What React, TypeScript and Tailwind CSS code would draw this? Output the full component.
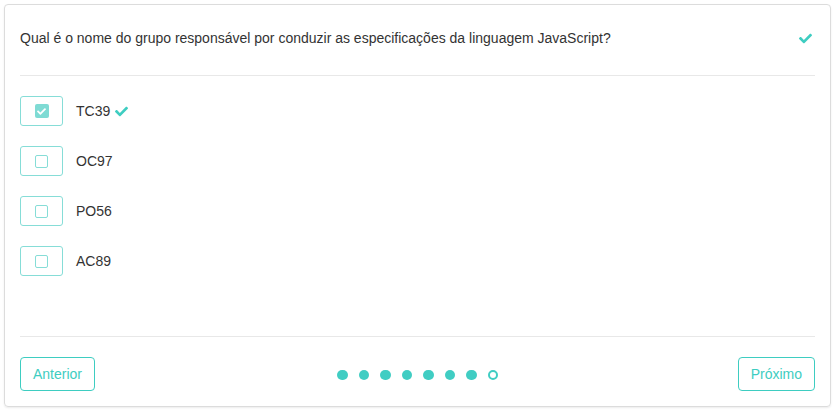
import React from "react";

const Check = ({ className = "" }: { className?: string }) => (
  <svg viewBox="0 0 512 512" className={className} fill="currentColor">
    <path d="M173.9 439.4l-166.4-166.4c-10-10-10-26.2 0-36.2l36.2-36.2c10-10 26.2-10 36.2 0L192 312.7 432.1 72.6c10-10 26.2-10 36.2 0l36.2 36.2c10 10 10 26.2 0 36.2L210.1 439.4c-10 10-26.2 10-36.2 0z" />
  </svg>
);

const options = [
  { label: "TC39", checked: true },
  { label: "OC97", checked: false },
  { label: "PO56", checked: false },
  { label: "AC89", checked: false },
];

export default function App() {
  return (
    <div
      className="w-[836px] h-[411px] bg-white p-[4px]"
      style={{ fontFamily: '"Liberation Sans", Arial, sans-serif' }}
    >
      <div className="h-[403px] w-[827px] border border-[#dcdcdc] rounded-[4px] px-[15px] flex flex-col shadow-[0_1px_2px_rgba(0,0,0,0.08)]">
        <div className="h-[71px] border-b border-[#e8e8e8] flex items-start justify-between pt-[24px]">
          <span className="text-[14px] leading-[18px] text-[#333]">
            Qual é o nome do grupo responsável por conduzir as especificações da linguagem JavaScript?
          </span>
          <Check className="w-[13px] h-[13px] text-[#3ecdc1] mr-[3px] mt-[3px]" />
        </div>
        <div className="flex flex-col gap-[20px] pt-[20px] h-[261px] border-b border-[#e8e8e8]">
          {options.map((o) => (
            <div key={o.label} className="flex items-center h-[30px]">
              <div className="w-[43px] h-[30px] border border-[#86ddd7] rounded-[3px] flex items-center justify-center">
                {o.checked ? (
                  <div className="w-[14px] h-[14px] rounded-[2px] bg-[#7fdbd4] flex items-center justify-center">
                    <Check className="w-[9px] h-[9px] text-white" />
                  </div>
                ) : (
                  <div className="w-[13px] h-[13px] rounded-[2px] border-[1.5px] border-[#86ddd7]" />
                )}
              </div>
              <span className="ml-[13px] text-[14px] text-[#333]">{o.label}</span>
              {o.checked && <Check className="ml-[5px] w-[13px] h-[13px] text-[#3ecdc1]" />}
            </div>
          ))}
        </div>
        <div className="flex items-center justify-between pt-[20px]">
          <button className="h-[34px] px-[12px] border border-[#3ecdc1] rounded-[4px] text-[14px] text-[#3ecdc1] bg-white">
            Anterior
          </button>
          <div className="flex items-center gap-[11px] ml-[3px] mt-[2px]">
            {[0, 1, 2, 3, 4, 5, 6].map((i) => (
              <div key={i} className="w-[10.5px] h-[10.5px] rounded-full bg-[#40cdc3]" />
            ))}
            <div className="w-[10.5px] h-[10.5px] rounded-full border-2 border-[#40cdc3]" />
          </div>
          <button className="h-[34px] px-[12px] border border-[#3ecdc1] rounded-[4px] text-[14px] text-[#3ecdc1] bg-white">
            Próximo
          </button>
        </div>
      </div>
    </div>
  );
}
